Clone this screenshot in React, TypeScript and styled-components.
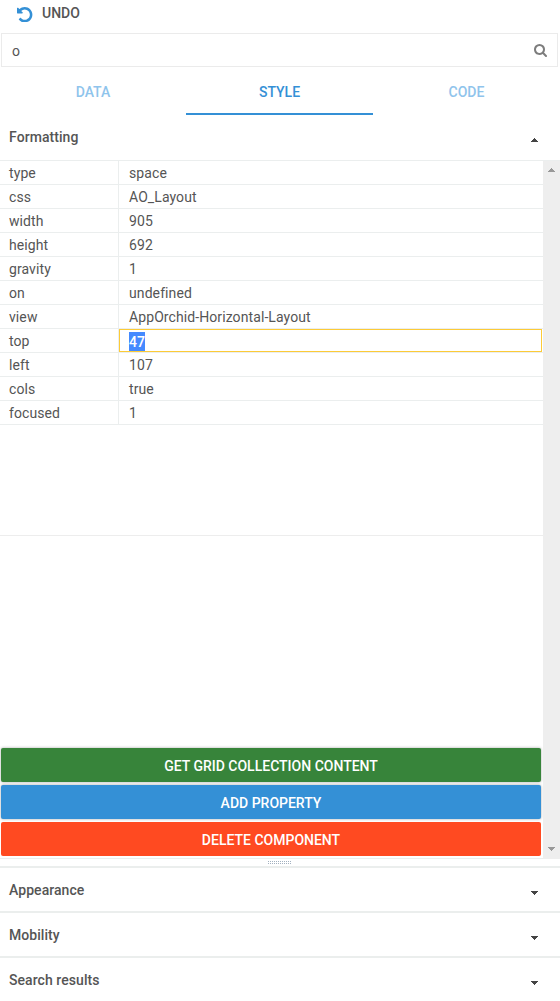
import React from "react";
import styled, { createGlobalStyle } from "styled-components";

const GlobalStyle = createGlobalStyle`
  *, *::before, *::after { box-sizing: border-box; }
  body {
    margin: 0;
    background: #fff;
    color: #555;
    font-family: Roboto, "Liberation Sans", sans-serif;
    font-size: 14px;
    overflow: hidden;
  }
`;

const Panel = styled.main`
  display: flex;
  flex-direction: column;
  width: 560px;
  height: 1001px;
  overflow: hidden;
`;

const Toolbar = styled.header`
  display: flex;
  align-items: flex-start;
  height: 33px;
  flex: none;
  padding-left: 17.4px;
`;

const UndoIcon = styled.svg`
  width: 15.4px;
  height: 15.4px;
  margin-top: 7px;
  fill: #3490d6;
`;

const UndoLabel = styled.span`
  margin-left: 9.2px;
  font-weight: 500;
  line-height: 26px;
`;

const SearchBox = styled.div`
  display: flex;
  align-items: center;
  justify-content: space-between;
  height: 34px;
  flex: none;
  margin: 0 2px 0 1px;
  padding: 1px 10px 0 10px;
  border: 1px solid #ebebeb;
`;

const SearchIcon = styled.svg`
  width: 13px;
  height: 13px;
  margin-bottom: 1px;
  fill: #7d7d7d;
`;

const Tabs = styled.nav`
  display: grid;
  grid-template-columns: 186px 187px 187px;
  grid-template-rows: 48px;
  height: 48px;
  flex: none;
`;

const Tab = styled.div<{ $active?: boolean }>`
  border-bottom: 2px solid ${(p) => (p.$active ? "#3490d6" : "transparent")};
  color: ${(p) => (p.$active ? "#3490d6" : "#8fc4ec")};
  font-weight: 500;
  line-height: 50px;
  text-align: center;
`;

const SectionHeader = styled.div<{ $divided?: boolean }>`
  display: flex;
  justify-content: space-between;
  height: 45px;
  flex: none;
  padding: 0 22px 0 9px;
  border-top: ${(p) => (p.$divided ? "2px solid #ebeeed" : "0")};
  font-weight: 500;
  letter-spacing: 0.06px;
  line-height: ${(p) => (p.$divided ? "44px" : "45px")};
`;

const Arrow = styled.svg<{ $top: number; $muted?: boolean }>`
  width: 7px;
  height: 4px;
  margin-top: ${(p) => p.$top}px;
  fill: ${(p) => (p.$muted ? "#999" : "#444")};
`;

const Content = styled.section`
  display: flex;
  height: 699px;
  flex: none;
`;

const Main = styled.div`
  display: flex;
  flex-direction: column;
  width: 543px;
  border-top: 1px solid #ebeeee;
  border-bottom: 1px solid #ebeeee;
`;

const Grid = styled.div`
  height: 375px;
  border-bottom: 1px solid #ededed;
`;

const Row = styled.div`
  display: grid;
  grid-template-columns: 119px 1fr;
  grid-template-rows: 23px;
  height: 24px;
  border-bottom: 1px solid #ebeeee;
  letter-spacing: 0.09px;
  line-height: 24px;
`;

const Name = styled.div`
  padding-left: 9px;
  border-right: 1px solid #ebeeee;
`;

const Value = styled.div`
  padding-left: 10px;
`;

const Editor = styled.div`
  margin-right: 1px;
  padding: 2px 0 0 9px;
  border: 1px solid #fccb37;
  line-height: 19px;
`;

const Selection = styled.span`
  display: block;
  width: 16px;
  height: 19px;
  background: #448aff;
  color: #fff;
  font-weight: 500;
  letter-spacing: 0;
  line-height: 20px;
`;

const Actions = styled.div`
  display: flex;
  flex-direction: column;
  gap: 3px;
  margin-top: auto;
  padding: 0 2px 2px 1px;
`;

const ActionButton = styled.button<{ $color: string; $raised?: boolean }>`
  height: 34px;
  padding: 1px 0 0;
  border: 0;
  border-radius: 2px;
  background: ${(p) => p.$color};
  box-shadow: ${(p) => (p.$raised ? "0 0 3px rgba(0, 0, 0, 0.35)" : "none")};
  color: #fff;
  font: 500 14px Roboto, "Liberation Sans", sans-serif;
`;

const ScrollTrack = styled.div`
  display: flex;
  flex-direction: column;
  align-items: center;
  justify-content: space-between;
  width: 17px;
  padding-bottom: 8px;
  border-top: 1px solid #ebeeee;
  background: #eee;
`;

const Resizer = styled.div`
  display: flex;
  justify-content: center;
  height: 7px;
  flex: none;
  padding-top: 2px;
`;

const Grip = styled.svg`
  width: 24px;
  height: 3px;
  fill: #a3b1c0;
`;

const properties: [string, string][] = [
  ["type", "space"],
  ["css", "AO_Layout"],
  ["width", "905"],
  ["height", "692"],
  ["gravity", "1"],
  ["on", "undefined"],
  ["view", "AppOrchid-Horizontal-Layout"],
  ["top", "47"],
  ["left", "107"],
  ["cols", "true"],
  ["focused", "1"],
];

const editing = "top";

function Caret({ up, top, muted }: { up?: boolean; top: number; muted?: boolean }) {
  return (
    <Arrow viewBox="0 0 7 4" $top={top} $muted={muted} shapeRendering="crispEdges">
      <path
        d={
          up
            ? "M3 0h1v1h1v1h1v1h1v1H0V3h1V2h1V1h1z"
            : "M0 0h7v1H6v1H5v1H4v1H3V3H2V2H1V1H0z"
        }
      />
    </Arrow>
  );
}

export default function App() {
  return (
    <Panel>
      <GlobalStyle />
      <Toolbar>
        <UndoIcon viewBox="0 128 1536 1536">
          <path d="M1536 896q0 156-61 298t-164 245-245 164-298 61q-172 0-327-72.5t-264-204.5q-7-10-6.5-22.5t8.5-20.5l137-138q10-9 25-9 16 2 23 12 73 95 179 147t225 52q104 0 198.5-40.5t163.5-109.5 109.5-163.5 40.5-198.5-40.5-198.5-109.5-163.5-163.5-109.5-198.5-40.5q-98 0-188 35.5t-160 101.5l137 138q31 30 14 69-17 40-59 40h-448q-26 0-45-19t-19-45v-448q0-42 40-59 39-17 69 14l130 129q107-101 244.5-156.5t284.5-55.5q156 0 298 61t245 164 164 245 61 298z" />
        </UndoIcon>
        <UndoLabel>UNDO</UndoLabel>
      </Toolbar>
      <SearchBox>
        <span>o</span>
        <SearchIcon viewBox="0 128 1664 1664">
          <path d="M1152 832q0-185-131.5-316.5t-316.5-131.5-316.5 131.5-131.5 316.5 131.5 316.5 316.5 131.5 316.5-131.5 131.5-316.5zm512 832q0 52-38 90t-90 38q-54 0-90-38l-343-342q-179 124-399 124-143 0-273.5-55.5t-225-150-150-225-55.5-273.5 55.5-273.5 150-225 225-150 273.5-55.5 273.5 55.5 225 150 150 225 55.5 273.5q0 220-124 399l343 343q37 37 37 90z" />
        </SearchIcon>
      </SearchBox>
      <Tabs>
        <Tab>DATA</Tab>
        <Tab $active>STYLE</Tab>
        <Tab>CODE</Tab>
      </Tabs>
      <SectionHeader>
        Formatting
        <Caret up top={23} />
      </SectionHeader>
      <Content>
        <Main>
          <Grid>
            {properties.map(([name, value]) => (
              <Row key={name}>
                <Name>{name}</Name>
                {name === editing ? (
                  <Editor>
                    <Selection>{value}</Selection>
                  </Editor>
                ) : (
                  <Value>{value}</Value>
                )}
              </Row>
            ))}
          </Grid>
          <Actions>
            <ActionButton $color="#37843a" $raised>GET GRID COLLECTION CONTENT</ActionButton>
            <ActionButton $color="#3490d6" $raised>ADD PROPERTY</ActionButton>
            <ActionButton $color="#ff4a21">DELETE COMPONENT</ActionButton>
          </Actions>
        </Main>
        <ScrollTrack>
          <Caret up top={7} muted />
          <Caret top={0} muted />
        </ScrollTrack>
      </Content>
      <Resizer>
        <Grip viewBox="0 0 24 3" shapeRendering="crispEdges">
          {Array.from({ length: 12 }, (_, i) => (
            <path key={i} d={`M${i * 2} 0h1v1h-1zM${i * 2} 2h1v1h-1z`} />
          ))}
        </Grip>
      </Resizer>
      {["Appearance", "Mobility", "Search results"].map((title) => (
        <SectionHeader key={title} $divided>
          {title}
          <Caret top={23} />
        </SectionHeader>
      ))}
    </Panel>
  );
}
